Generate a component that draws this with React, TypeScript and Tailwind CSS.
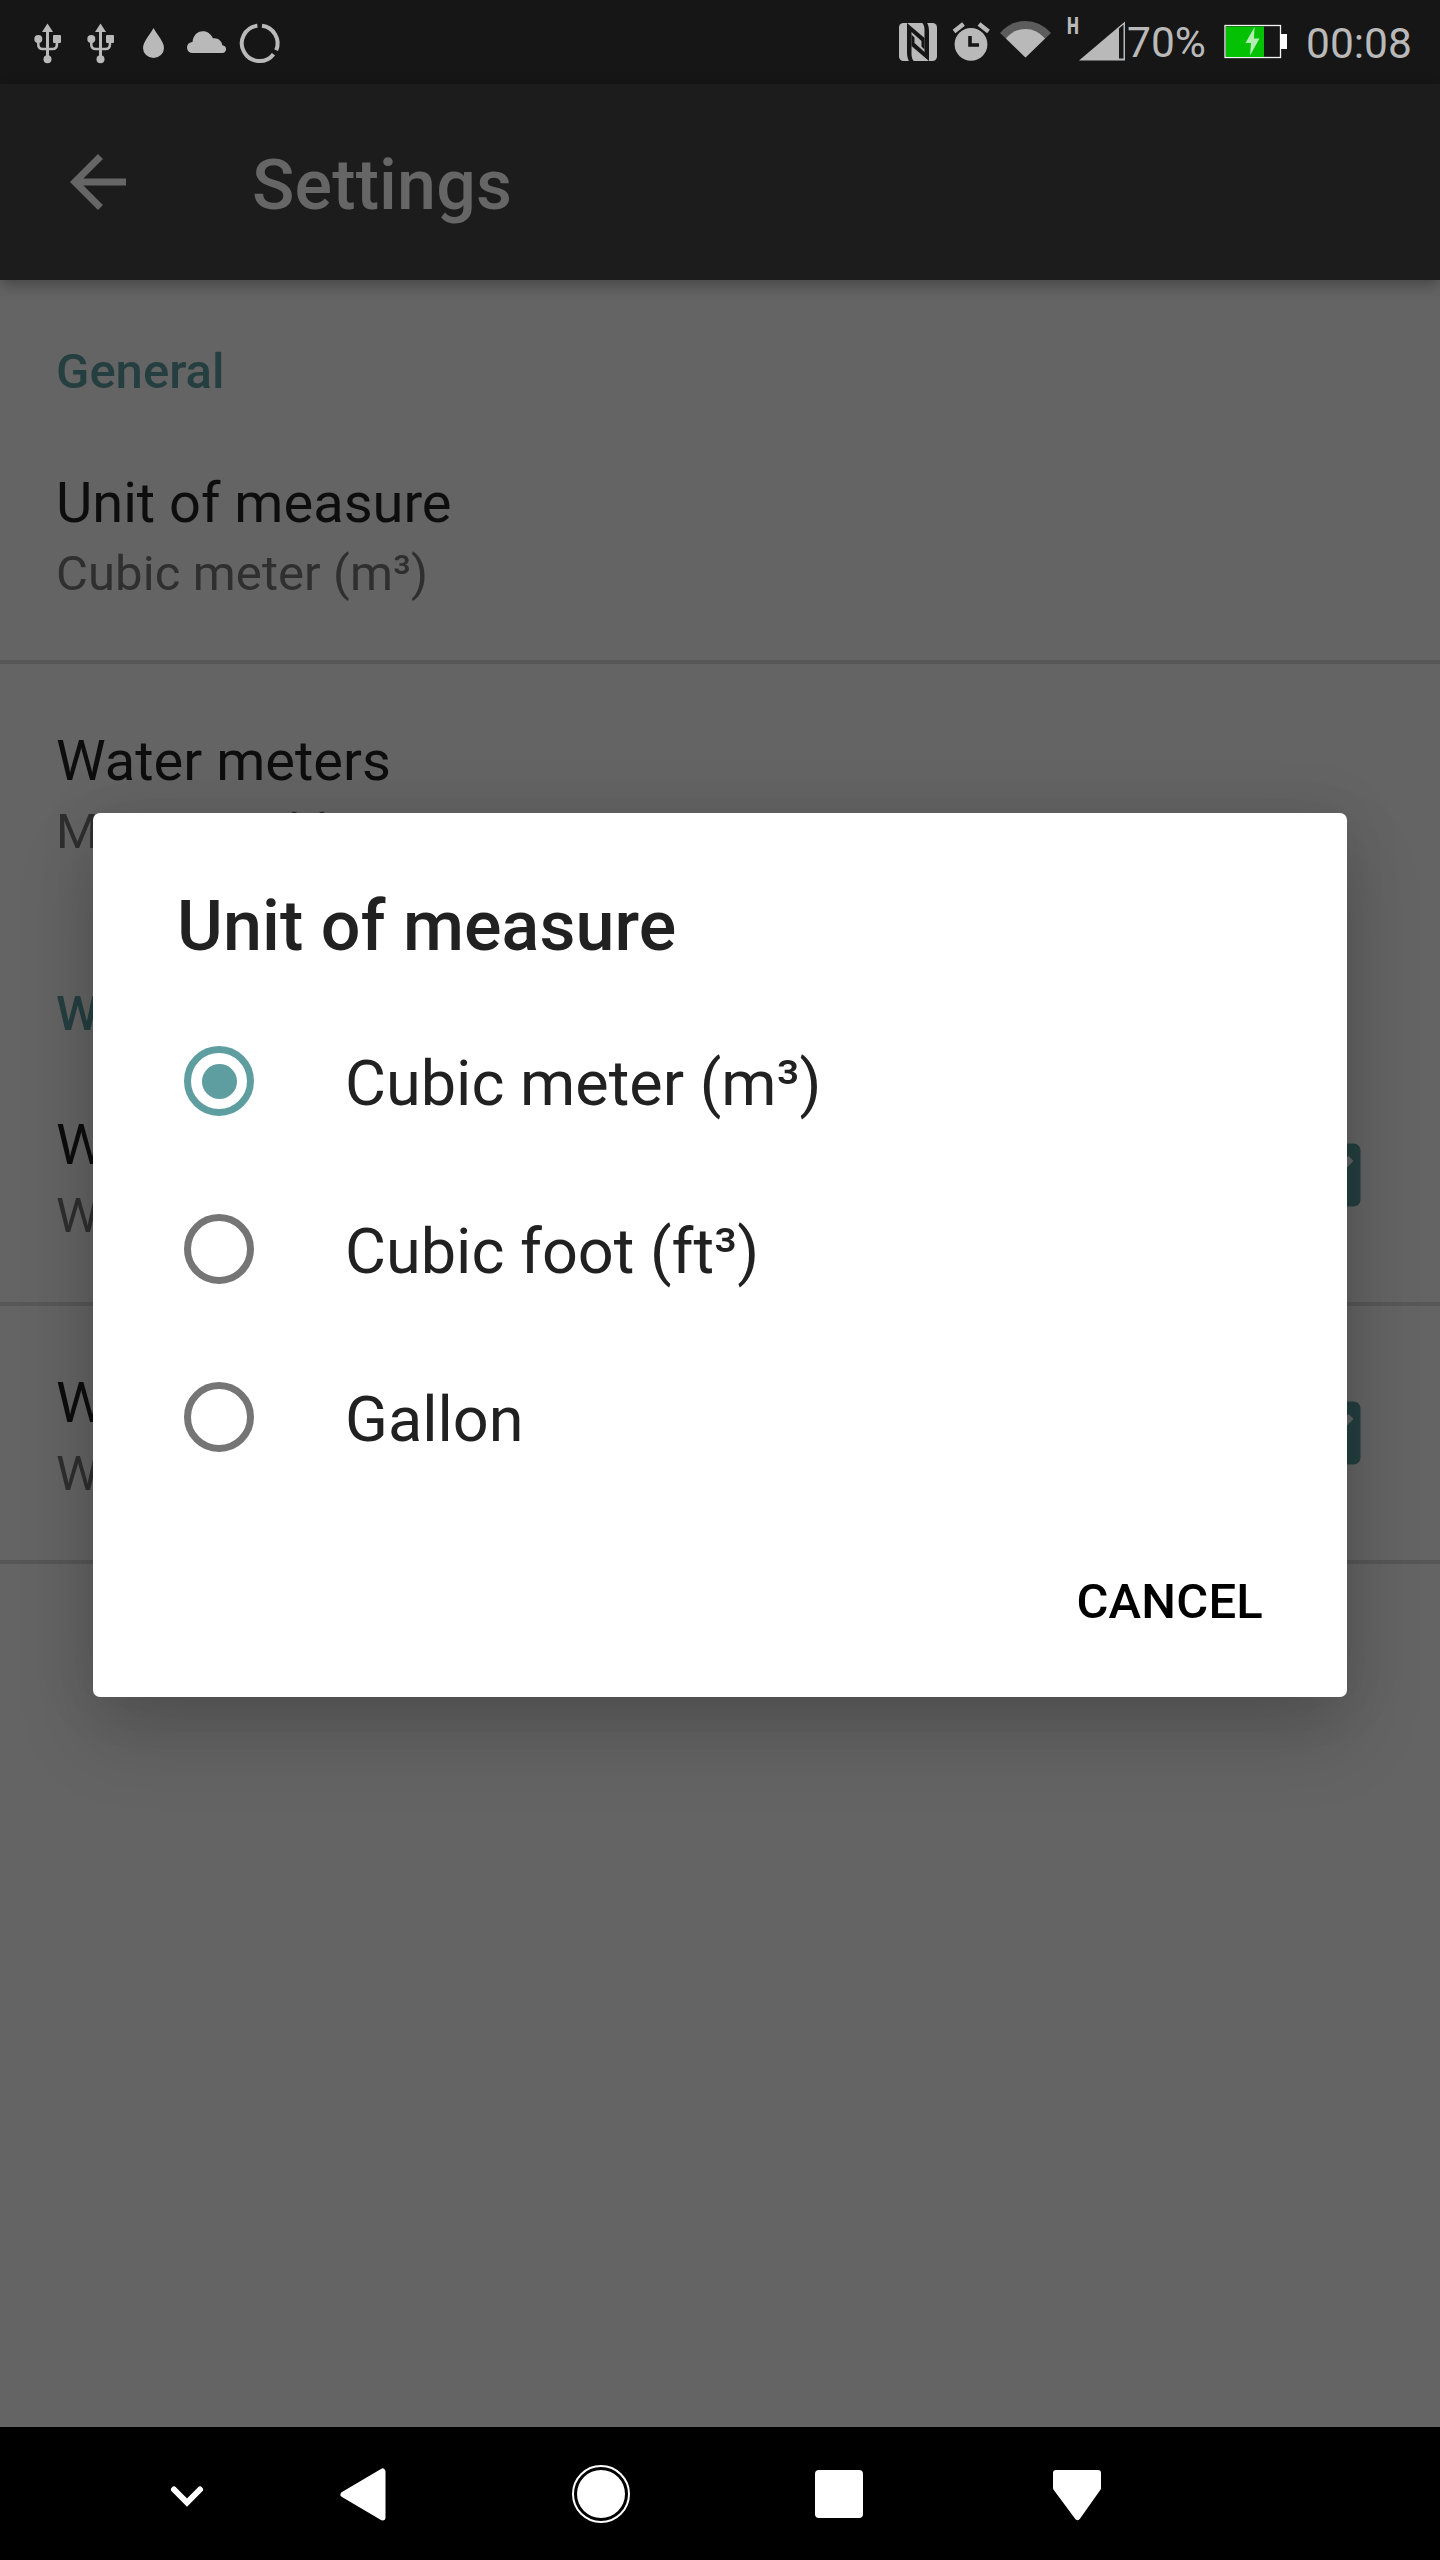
import type { ReactNode } from "react";

const GREY = "#b9b9b9";

function Slot({ x, w, children }: { x: number; w: number; children: ReactNode }) {
  return (
    <svg width={w} height={84} viewBox={`${x} 0 ${w} 84`} className="block shrink-0 overflow-visible">
      {children}
    </svg>
  );
}

function Usb() {
  return (
    <Slot x={21} w={53}>
      <g fill={GREY}>
        <path d="M47.5 23.5L53 32H42z" />
        <rect x={46} y={30} width={3} height={26} />
        <circle cx={38.3} cy={39} r={4} />
        <rect x={53} y={35} width={8} height={8} rx={1} />
        <circle cx={47.5} cy={59.3} r={4} />
        <path d="M38.3 42v2.5q0 4.5 4.5 4.5h9.6q4.5 0 4.5-4.5V42" fill="none" stroke={GREY} strokeWidth={2.6} />
      </g>
    </Slot>
  );
}

function StatusBar() {
  return (
    <header className="flex h-[84px] shrink-0 bg-[#161616] text-[#b9b9b9]">
      <div className="flex pl-[21px]">
        <Usb />
        <Usb />
        <Slot x={127} w={53}>
          <path d="M153.5 28C150.5 34 143 41.500 143 48a10.500 10 0 0 0 21 0C164 41.500 156.500 34 153.500 28z" fill={GREY} />
        </Slot>
        <Slot x={180} w={53}>
          <path d="M192.500 53a5.500 5.500 0 0 1 0-11C193 36 197 31.300 203 31.300c4.500 0 8 2.700 10 7.200 4.500-.8 8.700 2.200 9.300 6.800 5 .4 5 7.700 0 7.700z" fill={GREY} />
        </Slot>
        <Slot x={233} w={53}>
          <g fill="none" stroke={GREY} strokeWidth={4}>
            <path d="M262 25.800A17.700 17.700 0 0 1 276.200 50.200" />
            <path d="M257.400 25.800A17.700 17.700 0 1 0 273.500 54.200" />
          </g>
        </Slot>
      </div>
      <div className="ml-auto flex">
        <Slot x={893} w={54}>
          <rect x={899} y={23} width={38} height={38} rx={4.500} fill={GREY} />
          <g fill="#161616">
            <path d="M907 23L924.500 38V49.500L921.500 46.500V41L911.500 32V54Q911.500 59 914 61.200H909Q907 58 907 52z" />
            <path d="M929 61L911.500 46V34.500L914.500 37.500V43L924.500 52V30Q924.500 25 922 22.800H927Q929 26 929 32z" />
          </g>
        </Slot>
        <Slot x={947} w={49}>
          <circle cx={971} cy={44.300} r={16.400} fill={GREY} />
          <path d="M954 31.500l9.500-7.500M988.500 31.500L979 24" stroke={GREY} strokeWidth={4.500} />
          <path d="M970 36v9h9" fill="none" stroke="#161616" strokeWidth={3.600} />
        </Slot>
        <Slot x={996} w={60}>
          <path d="M1025.500 57.500L1000 33Q1011 21 1025.500 21T1051 33z" fill="#5c5c5c" />
          <path d="M1025.500 57.500L1006 38.500Q1014 29 1025.500 29T1045 38.500z" fill={GREY} />
        </Slot>
        <span className="h-fit w-[22px] pt-[13px] pl-[11px] font-['Roboto'] text-[24px] leading-[26px] font-black">
          <span className="block origin-left scale-x-70">H</span>
        </span>
        <Slot x={1078} w={48}>
          <path d="M1079 60.500L1125 21.500V60.500z" fill={GREY} />
          <path d="M1119 28.500l4.500-4V58.500H1119z" fill="#161616" />
        </Slot>
        <span className="w-[95px] pt-[18px] pl-px text-[42.500px] leading-[50px]">70%</span>
        <Slot x={1221} w={70}>
          <rect x={1225} y={25.500} width={55.500} height={32} fill="none" stroke="#f4f4f4" strokeWidth={1.300} />
          <rect x={1226} y={26.500} width={38} height={30.500} fill="#04c104" />
          <rect x={1280} y={34} width={7} height={15} fill="#fff" />
          <path d="M1254.500 27L1245.500 43h5.500l-1 12.500 9.500-17h-5.500z" fill="#b3edb3" />
        </Slot>
        <span className="w-[149px] pt-[19px] pl-[15px] text-[42.500px] leading-[50px]">00:08</span>
      </div>
    </header>
  );
}

function Category({ children }: { children: ReactNode }) {
  return (
    <h2 className="h-[126px] px-14 pt-[62px] text-[49px] leading-[60px] font-medium whitespace-nowrap text-[#253f40]">{children}</h2>
  );
}

function Preference({ title, summary, checked, last }: { title: string; summary: string; checked?: boolean; last?: boolean }) {
  return (
    <div className={`flex h-[258px] border-b-4 pl-14 ${last ? "border-transparent" : "border-[#575757]"}`}>
      <div className="flex flex-1 flex-col gap-2 pt-16 whitespace-nowrap">
        <div className="text-[56px] leading-[66px] text-[#0d0d0d]">{title}</div>
        <div className="text-[49px] leading-[60px] tracking-[0.1px] text-[#2f2f2f]">{summary}</div>
      </div>
      {checked && (
        <svg className="mr-[69px] size-[84px] self-center" viewBox="0 0 24 24" fill="#253f40">
          <path d="M19 3H5c-1.110 0-2 .9-2 2v14c0 1.100.890 2 2 2h14c1.110 0 2-.9 2-2V5c0-1.100-.890-2-2-2zm-9 14l-5-5 1.410-1.410L10 14.170l7.590-7.590L19 8l-9 9z" />
        </svg>
      )}
    </div>
  );
}

function Option({ label, selected }: { label: string; selected?: boolean }) {
  return (
    <div className="flex h-[168px] items-center gap-[91px] pl-[91px]">
      <span className={`flex size-[70px] items-center justify-center rounded-full border-[7px] ${selected ? "border-[#5f9ea0]" : "border-[#757575]"}`}>
        {selected && <span className="size-[35px] rounded-full bg-[#5f9ea0]" />}
      </span>
      <span className="pt-[5px] text-[63px] leading-[74px] text-[#212121]">{label}</span>
    </div>
  );
}

function Dialog() {
  return (
    <div className="absolute top-[813px] left-[93px] flex h-[884px] w-[1254px] flex-col rounded-[7px] bg-white shadow-[0_40px_76px_rgba(0,0,0,0.17),0_0_60px_rgba(0,0,0,0.10)]">
      <h1 className="mb-[30px] pt-[72px] pl-[84px] text-[70px] leading-[82px] font-medium tracking-[0.1px] text-[#212121]">Unit of measure</h1>
      <Option label="Cubic meter (m³)" selected />
      <Option label="Cubic foot (ft³)" />
      <Option label="Gallon" />
      <button className="mt-[71px] mr-[84px] self-end text-[49px] leading-[60px] font-medium tracking-[0.2px] text-black">CANCEL</button>
    </div>
  );
}

function NavBar() {
  return (
    <nav className="flex h-[133px] shrink-0 items-center bg-black pl-[130px]">
      <svg width={114} height={133} viewBox="130 2427 114 133">
        <path d="M174 2489.500l13 13 13-13" fill="none" stroke="#fff" strokeWidth={6} strokeLinecap="round" />
      </svg>
      <svg width={238} height={133} viewBox="244 2427 238 133">
        <path d="M343.500 2494.500L382.500 2471.500V2517.500z" fill="#fff" stroke="#fff" strokeWidth={6} strokeLinejoin="round" />
      </svg>
      <svg width={238} height={133} viewBox="482 2427 238 133">
        <circle cx={601} cy={2494} r={28} fill="none" stroke="#fff" strokeWidth={2} />
        <circle cx={601} cy={2494} r={24} fill="#fff" />
      </svg>
      <svg width={238} height={133} viewBox="720 2427 238 133">
        <rect x={815} y={2470} width={48} height={48} rx={4} fill="#fff" />
      </svg>
      <svg width={238} height={133} viewBox="958 2427 238 133">
        <path d="M1056 2473h42v15L1077.500 2517 1056 2488z" fill="#fff" stroke="#fff" strokeWidth={6} strokeLinejoin="round" />
      </svg>
    </nav>
  );
}

export default function App() {
  return (
    <div className="relative flex h-[2560px] w-[1440px] flex-col overflow-hidden bg-[#646464] font-['Roboto',sans-serif]">
      <StatusBar />
      <div className="relative flex h-[196px] shrink-0 items-center bg-[#1c1c1c] pl-[56px] shadow-[0_5px_14px_rgba(0,0,0,0.3)]">
        <svg className="size-[84px] text-[#666]" viewBox="0 0 24 24" fill="currentColor">
          <path d="M20 11H7.830l5.590-5.590L12 4l-8 8 8 8 1.410-1.410L7.830 13H20v-2z" />
        </svg>
        <span className="pt-[6px] pl-[112px] text-[70px] leading-[82px] font-medium tracking-[0.15px] text-[#666]">Settings</span>
      </div>
      <main className="flex-1">
        <Category>General</Category>
        <Preference title="Unit of measure" summary="Cubic meter (m³)" />
        <Preference title="Water meters" summary="Manage add" last />
        <Category>W</Category>
        <Preference title="W" summary="W" checked />
        <Preference title="W" summary="W" checked />
      </main>
      <NavBar />
      <Dialog />
    </div>
  );
}
